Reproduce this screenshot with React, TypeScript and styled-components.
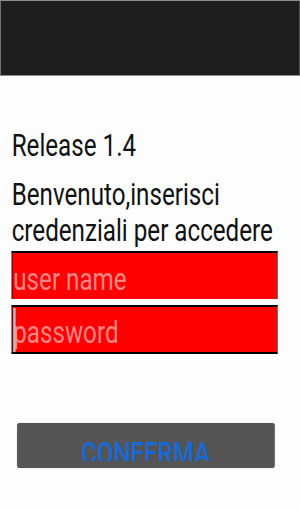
import React from 'react';
import styled, { createGlobalStyle } from 'styled-components';

// the reference is an Android screen squeezed horizontally, so the whole
// screen is laid out wider and then scaled on the x axis
const SQUEEZE = 0.78;

const GlobalStyle = createGlobalStyle`
  html, body {
    margin: 0;
    padding: 0;
    background: #fdfdfd;
    overflow: hidden;
  }
`;

const Frame = styled.div`
  width: 300px;
  height: 509px;
  overflow: hidden;
  background: #fdfdfd;
`;

const Screen = styled.div`
  width: ${300 / SQUEEZE}px;
  height: 509px;
  display: flex;
  flex-direction: column;
  transform: scaleX(${SQUEEZE});
  transform-origin: 0 0;
  font-family: Roboto, 'Noto Sans', sans-serif;
  color: #111111;
`;

const ActionBar = styled.div`
  box-sizing: border-box;
  height: 76px;
  flex-shrink: 0;
  background: #1e1e1e;
  border: 1px solid #8c8c8c;
`;

const Content = styled.div`
  display: flex;
  flex-direction: column;
  padding: 0 15px;
`;

const Title = styled.div`
  margin-top: 52px;
  font-size: 31px;
  line-height: 36px;
`;

const Intro = styled.div`
  margin-top: 13px;
  font-size: 31px;
  line-height: 36px;
`;

const Field = styled.div<{ $gap: number; $closed?: boolean; $focused?: boolean }>`
  position: relative;
  box-sizing: border-box;
  width: 341px;
  height: ${(p) => (p.$closed ? 49 : 48)}px;
  margin-top: ${(p) => p.$gap}px;
  background: #ff0000;
  border-top: 2px solid #000000;
  border-left: 1px solid #000000;
  border-right: 1px solid #6a6a6a;
  border-bottom: ${(p) => (p.$closed ? '2px solid #000000' : 'none')};

  &::before {
    content: '';
    display: ${(p) => (p.$focused ? 'block' : 'none')};
    position: absolute;
    left: 1px;
    top: 1px;
    bottom: 0;
    width: 3px;
    background: #a9c7c5;
  }
`;

const TextInput = styled.input`
  box-sizing: border-box;
  display: block;
  width: 100%;
  height: 100%;
  margin: 0;
  padding: 8px 0 2px 1px;
  border: none;
  outline: none;
  background: transparent;
  font-family: Roboto, 'Noto Sans', sans-serif;
  font-size: 31px;
  line-height: 36px;
  color: #111111;

  &::placeholder {
    color: #ff8585;
    opacity: 1;
  }
`;

const Button = styled.button`
  box-sizing: border-box;
  display: flex;
  justify-content: center;
  align-items: flex-start;
  width: 330px;
  height: 45px;
  margin: 69px 0 0 7px;
  padding: 13px 0 0;
  border: none;
  border-radius: 3px;
  background: #555555;
  box-shadow: 0 0 1px rgba(0, 0, 0, 0.45);
`;

const ButtonLabel = styled.span`
  display: block;
  height: 25px;
  overflow: hidden;
  font-family: Roboto, 'Noto Sans', sans-serif;
  font-size: 31px;
  font-weight: 500;
  line-height: 36px;
  color: #1769d6;
`;

export default function App() {
  return (
    <Frame>
      <GlobalStyle />
      <Screen>
        <ActionBar />
        <Content>
          <Title>Release 1.4</Title>
          <Intro>Benvenuto,inserisci credenziali per accedere</Intro>
          <Field $gap={2}>
            <TextInput type="text" placeholder="user name" />
          </Field>
          <Field $gap={6} $closed $focused>
            <TextInput type="password" placeholder="password" />
          </Field>
          <Button type="button">
            <ButtonLabel>CONFERMA</ButtonLabel>
          </Button>
        </Content>
      </Screen>
    </Frame>
  );
}
